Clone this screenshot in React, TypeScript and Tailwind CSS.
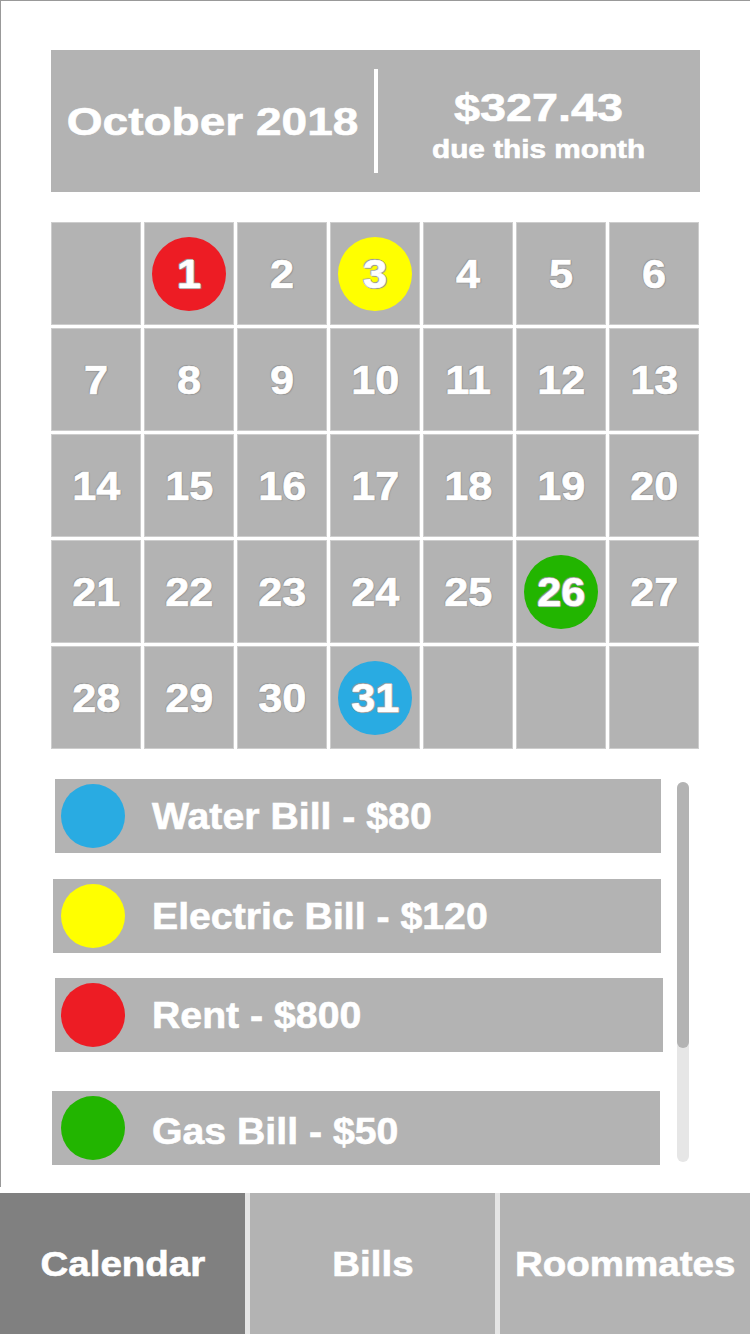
const font = "font-['Liberation_Sans',Arial,sans-serif]";

// the mockup's lettering is a touch heavier than Arial bold
const heavy = "[-webkit-text-stroke:0.6px_#fff]";

const outline =
  "[text-shadow:1px_0_0_#999,-1px_0_0_#999,0_1px_0_#999,0_-1px_0_#999,1px_1px_1px_#999,-1px_-1px_1px_#999]";

type Day = { n?: number; color?: string };

const marks: Record<number, string> = {
  1: "bg-[#ed1c24]",
  3: "bg-[#ffff00]",
  26: "bg-[#22b500]",
  31: "bg-[#29abe2]",
};

const days: Day[] = [
  {},
  ...Array.from({ length: 31 }, (_, i) => ({ n: i + 1, color: marks[i + 1] })),
  {},
  {},
  {},
];

// row boxes sit slightly off each other in the mockup, the dot and label don't
const bills = [
  { label: "Water Bill - $80", color: "bg-[#29abe2]", cls: "ml-[4px] w-[606px]", dot: "ml-[6px]", txt: "" },
  { label: "Electric Bill - $120", color: "bg-[#ffff00]", cls: "ml-[2px] w-[608px] mt-[26px]", dot: "ml-[8px]", txt: "" },
  { label: "Rent - $800", color: "bg-[#ed1c24]", cls: "ml-[4px] w-[608px] mt-[25px]", dot: "ml-[6px]", txt: "" },
  { label: "Gas Bill - $50", color: "bg-[#22b500]", cls: "ml-[1px] w-[608px] mt-[39px]", dot: "ml-[9px]", txt: "mt-[7px]" },
];

const tabs = [
  { label: "Calendar", active: true, cls: "w-[245px]" },
  { label: "Bills", active: false, cls: "w-[245px]" },
  { label: "Roommates", active: false, cls: "flex-1" },
];

export default function App() {
  return (
    <div className={`w-[750px] h-[1334px] bg-white flex flex-col overflow-hidden ${font}`}>
      <div className="h-[1187px] border-t border-l border-[#999] pl-[50px] pt-[49px]">
        {/* month header */}
        <div className={`w-[649px] h-[142px] bg-[#b3b3b3] flex items-center text-white font-bold ${heavy}`}>
          <div className="flex-1 flex justify-center">
            <span className="inline-block text-[39px] leading-none scale-x-[1.18]">October 2018</span>
          </div>
          <div className="w-[4px] h-[104px] bg-white" />
          <div className="flex-1 flex flex-col items-center pt-[8px]">
            <span className="inline-block text-[39px] leading-none scale-x-[1.2]">$327.43</span>
            <span className="inline-block text-[25px] leading-none scale-x-[1.19] mt-[10px]">due this month</span>
          </div>
        </div>

        {/* calendar */}
        <div className="mt-[30px] w-[648px] grid grid-cols-7 gap-[3px]">
          {days.map((d, i) => (
            <div
              key={i}
              className="h-[103px] bg-[#b3b3b3] border border-[#cdcdcd] flex items-center justify-center"
            >
              {d.n && (
                <div
                  className={`w-[74px] h-[74px] rounded-full flex items-center justify-center ${d.color ?? ""}`}
                >
                  <span
                    className={`inline-block text-[40px] leading-none font-bold text-white scale-x-[1.08] ${heavy} ${outline}`}
                  >
                    {d.n}
                  </span>
                </div>
              )}
            </div>
          ))}
        </div>

        {/* bill list */}
        <div className="mt-[30px] flex">
          <div className="w-[615px] flex flex-col">
            {bills.map((b) => (
              <div key={b.label} className={`h-[74px] bg-[#b3b3b3] flex items-center ${b.cls}`}>
                <div className={`w-[64px] h-[64px] rounded-full shrink-0 ${b.dot} ${b.color}`} />
                <span
                  className={`ml-[27px] inline-block origin-left text-[37px] leading-none font-bold text-white scale-x-[1.06] ${heavy} ${b.txt}`}
                >
                  {b.label}
                </span>
              </div>
            ))}
          </div>
          <div className="ml-[11px] mt-[3px] w-[12px] h-[380px] rounded-full bg-[#e6e6e6] flex flex-col">
            <div className="h-[266px] rounded-full bg-[#b3b3b3]" />
          </div>
        </div>
      </div>

      {/* bottom tabs */}
      <div className="mt-[6px] h-[141px] flex gap-[5px] bg-[#e5e5e5]">
        {tabs.map((t) => (
          <div
            key={t.label}
            className={`flex items-center justify-center ${t.cls} ${t.active ? "bg-[#808080]" : "bg-[#b3b3b3]"}`}
          >
            <span className={`inline-block text-[35px] leading-none font-bold text-white scale-x-[1.1] ${heavy}`}>
              {t.label}
            </span>
          </div>
        ))}
      </div>
    </div>
  );
}
